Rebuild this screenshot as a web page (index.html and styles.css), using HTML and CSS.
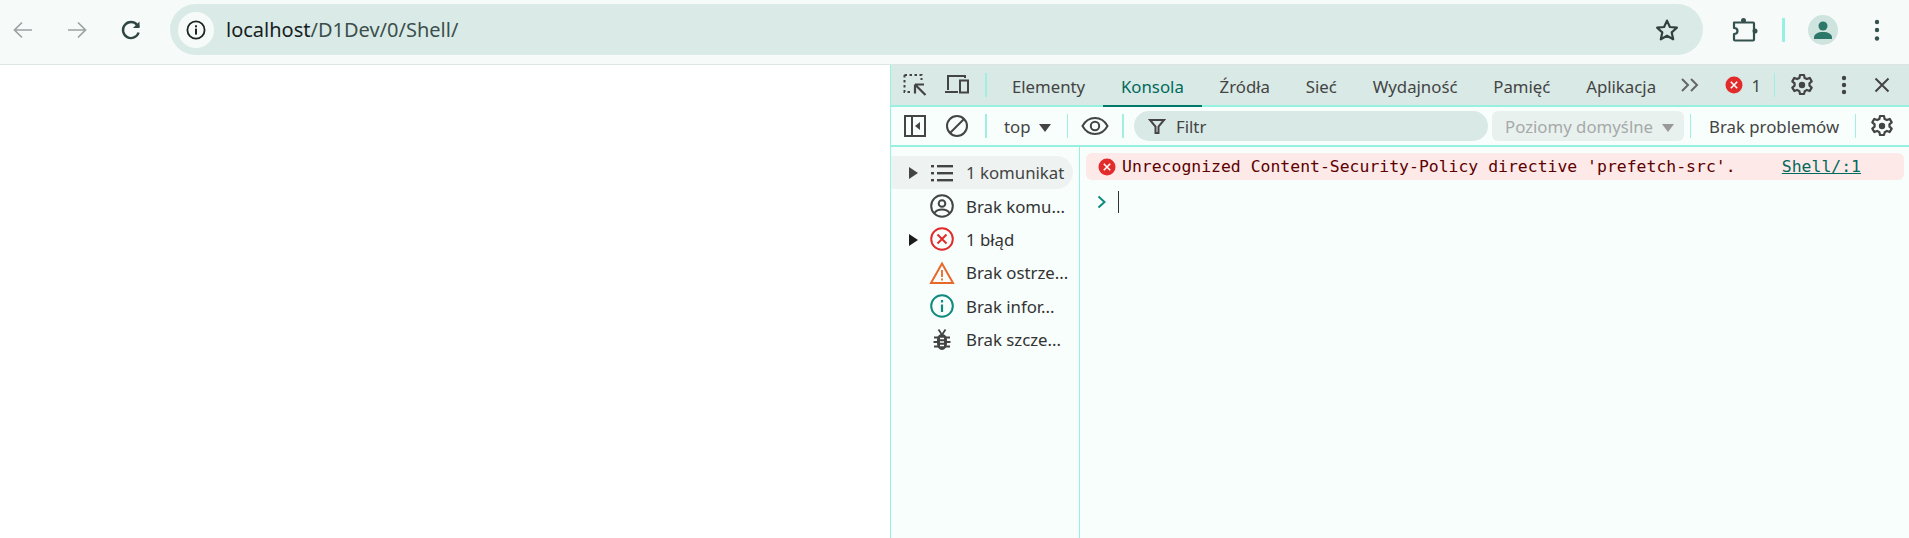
FILE: index.html
```html
<!DOCTYPE html>
<html lang="pl">
<head>
  <meta charset="UTF-8">
  <meta name="viewport" content="width=device-width, initial-scale=1.0">
  <title>localhost/D1Dev/0/Shell/</title>
  <link rel="stylesheet" href="styles.css">
</head>
<body>
  <header class="chrome-bar">
    <button class="nav-btn"><svg width="24" height="24" viewBox="0 0 24 24" fill="none" stroke="#9aa3a1" stroke-width="1.7"><path d="M21 12H3.500M11 4.500L3.500 12l7.500 7.500"/></svg></button>
    <button class="nav-btn"><svg width="24" height="24" viewBox="0 0 24 24" fill="none" stroke="#9aa3a1" stroke-width="1.7"><path d="M3 12h17.500M13 4.500l7.500 7.500-7.500 7.500"/></svg></button>
    <button class="nav-btn"><svg width="24" height="24" viewBox="0 0 24 24" fill="none" stroke="#2f4643" stroke-width="2.400"><path d="M19.600 14.500a8 8 0 1 1-1.500-7.600L20 9"/><path d="M20.500 3.500V10H14" fill="#2f4643" stroke="none"/></svg></button>
    <div class="omnibox">
      <span class="site-info"><svg width="22" height="22" viewBox="0 0 22 22"><circle cx="11" cy="11" r="8.600" fill="none" stroke="#1b2523" stroke-width="1.800"/><rect x="10" y="9.600" width="2" height="6" fill="#1b2523"/><rect x="10" y="6.300" width="2" height="2" fill="#1b2523"/></svg></span>
      <span class="url"><span class="url-host">localhost</span>/D1Dev/0/Shell/</span>
      <svg class="star" width="26" height="26" viewBox="0 0 26 26" fill="none" stroke="#34403e" stroke-width="2.200"><path d="M13 3.600l2.900 6.400 7 .7-5.200 4.700 1.500 6.900-6.200-3.600-6.200 3.600 1.500-6.900-5.200-4.700 7-.7z" stroke-linejoin="round"/></svg>
    </div>
    <button class="nav-btn puzzle"><svg width="28" height="28" viewBox="0 0 28 28" fill="none" stroke="#35514d" stroke-width="2.200" stroke-linejoin="round"><path d="M4 6.500h19a1 1 0 0 1 1 1v16a1 1 0 0 1-1 1H5a1 1 0 0 1-1-1v-5.500c2.500 0 3.500-1.500 3.500-3s-1-3-3.500-3z"/><circle cx="13.500" cy="4.500" r="2.500" fill="#35514d" stroke="none"/><circle cx="25" cy="15" r="2.500" fill="#35514d" stroke="none"/></svg></button>
    <span class="bar-sep"></span>
    <span class="avatar"><svg width="30" height="30" viewBox="0 0 30 30"><circle cx="15" cy="15" r="15" fill="#cfe4df"/><circle cx="15" cy="11" r="4.500" fill="#2d766a"/><path d="M6 22.500c0-3.500 4-5.500 9-5.500s9 2 9 5.500V24H6z" fill="#2d766a"/></svg></span>
    <button class="nav-btn kebab"><svg width="8" height="24" viewBox="0 0 8 24" fill="#35514d"><circle cx="4" cy="4" r="2.200"/><circle cx="4" cy="12" r="2.200"/><circle cx="4" cy="20.500" r="2.200"/></svg></button>
  </header>

  <main class="content">
    <div class="page"></div>

    <section class="devtools">
      <div class="tabbar">
        <button class="tool"><svg width="26" height="26" viewBox="0 0 26 26" fill="none" stroke="#444"><path d="M2.500 3h17v5M2.500 3v17h6" stroke-width="2" stroke-dasharray="2.500 2.500"/><path d="M13 12.500h9M13 12.500v9M13.500 13l10 10" stroke-width="2.200"/></svg></button>
        <button class="tool"><svg width="26" height="26" viewBox="0 0 26 26" fill="none" stroke="#444" stroke-width="2"><path d="M4 18V4h17v2M1 20h13"/><rect x="16" y="8.500" width="8" height="12"/></svg></button>
        <span class="sep"></span>
        <nav class="tabs">
          <a class="tab">Elementy</a>
          <a class="tab active">Konsola</a>
          <a class="tab">Źródła</a>
          <a class="tab">Sieć</a>
          <a class="tab">Wydajność</a>
          <a class="tab">Pamięć</a>
          <a class="tab">Aplikacja</a>
        </nav>
        <button class="more"><svg width="20" height="16" viewBox="0 0 20 16" fill="none" stroke="#666" stroke-width="2"><path d="M2 2l6 6-6 6M11 2l6 6-6 6"/></svg></button>
        <div class="tabbar-right">
          <span class="err-count"><svg width="18" height="18" viewBox="0 0 18 18"><circle cx="9" cy="9" r="8.500" fill="#e22c2c"/><path d="M5.800 5.800l6.400 6.400M12.200 5.800l-6.400 6.400" stroke="#fff" stroke-width="1.600"/></svg><span>1</span></span>
          <span class="sep"></span>
          <button class="tool gear"><svg width="24" height="24" viewBox="0 0 24 24" fill="none" stroke="#444" stroke-width="2.200" stroke-linejoin="round"><path d="M10 2h4l.6 3 2.300 1.100 2.800-1.200 2 3.400-2.300 2 .1 2.400 2.200 1.900-2 3.400-2.800-1.100-2.200 1.300-.7 2.800h-4l-.6-2.800-2.300-1.300-2.800 1.100-2-3.400 2.300-1.900V10.300l-2.300-2 2-3.400 2.800 1.200 2.300-1.100z"/><circle cx="12" cy="12" r="3.200" fill="#444" stroke="none"/></svg></button>
          <button class="tool dots"><svg width="6" height="20" viewBox="0 0 6 20" fill="#444"><circle cx="3" cy="3" r="2.200"/><circle cx="3" cy="10" r="2.200"/><circle cx="3" cy="17" r="2.200"/></svg></button>
          <button class="tool close"><svg width="18" height="18" viewBox="0 0 18 18" stroke="#444" stroke-width="2"><path d="M2.500 2.500l13 13M15.500 2.500l-13 13"/></svg></button>
        </div>
      </div>

      <div class="console-bar">
        <button class="tool"><svg width="22" height="22" viewBox="0 0 22 22" fill="none" stroke="#444" stroke-width="2"><rect x="1" y="1" width="20" height="20"/><path d="M8 1v20"/><path d="M16 7v8l-5-4z" fill="#444" stroke="none"/></svg></button>
        <button class="tool"><svg width="24" height="24" viewBox="0 0 24 24" fill="none" stroke="#444" stroke-width="2"><circle cx="12" cy="12" r="10"/><path d="M5 19L19 5"/></svg></button>
        <span class="sep"></span>
        <span class="context">top<i class="caret"></i></span>
        <span class="sep thin"></span>
        <button class="tool eye"><svg width="28" height="20" viewBox="0 0 28 20" fill="none" stroke="#444" stroke-width="2"><path d="M1.500 10C4.500 4.500 9 2 14 2s9.500 2.500 12.500 8c-3 5.500-7.500 8-12.500 8S4.500 15.500 1.500 10z"/><circle cx="14" cy="10" r="4.200"/></svg></button>
        <span class="sep"></span>
        <div class="filter">
          <svg width="18" height="18" viewBox="0 0 18 18" fill="none" stroke="#444" stroke-width="2"><path d="M2 3h14l-5.500 6.500V16h-3V9.500z"/></svg>
          <span>Filtr</span>
        </div>
        <div class="levels">Poziomy domyślne<i class="caret muted"></i></div>
        <span class="sep thin"></span>
        <span class="issues">Brak problemów</span>
        <span class="sep thin"></span>
        <button class="tool gear2"><svg width="24" height="24" viewBox="0 0 24 24" fill="none" stroke="#444" stroke-width="2.200" stroke-linejoin="round"><path d="M10 2h4l.6 3 2.300 1.100 2.800-1.200 2 3.400-2.300 2 .1 2.400 2.200 1.900-2 3.400-2.800-1.100-2.200 1.300-.7 2.800h-4l-.6-2.800-2.300-1.300-2.800 1.100-2-3.400 2.300-1.900V10.300l-2.300-2 2-3.400 2.800 1.200 2.300-1.100z"/><circle cx="12" cy="12" r="3.200" fill="#444" stroke="none"/></svg></button>
      </div>

      <div class="console-body">
        <aside class="sidebar">
          <div class="side-row selected"><i class="tri grey"></i>
            <svg width="24" height="24" viewBox="0 0 24 24" fill="#444"><rect x="1" y="4" width="3" height="2.400"/><rect x="7" y="4" width="16" height="2.400"/><rect x="1" y="11" width="3" height="2.400"/><rect x="7" y="11" width="16" height="2.400"/><rect x="1" y="18" width="3" height="2.400"/><rect x="7" y="18" width="16" height="2.400"/></svg>
            <span>1 komunikat</span></div>
          <div class="side-row">
            <svg width="24" height="24" viewBox="0 0 24 24" fill="none" stroke="#444" stroke-width="2"><circle cx="12" cy="12" r="10.800"/><circle cx="12" cy="9.500" r="3.300"/><path d="M4.500 19c1.500-2.500 4.500-3.500 7.500-3.500s6 1 7.500 3.500"/></svg>
            <span>Brak komu...</span></div>
          <div class="side-row"><i class="tri"></i>
            <svg width="24" height="24" viewBox="0 0 24 24" fill="none" stroke="#e22c2c" stroke-width="2"><circle cx="12" cy="12" r="10.800"/><path d="M7.500 7.500l9 9M16.500 7.500l-9 9"/></svg>
            <span>1 błąd</span></div>
          <div class="side-row">
            <svg class="warn" width="26" height="24" viewBox="0 0 26 24" fill="none" stroke="#e8682a" stroke-width="2"><path d="M13 2.500L2 22h22z"/><path d="M13 9v7M13 17.500v2" stroke-width="1.800"/></svg>
            <span>Brak ostrze...</span></div>
          <div class="side-row">
            <svg width="24" height="24" viewBox="0 0 24 24" fill="none" stroke="#0f8a7e" stroke-width="2"><circle cx="12" cy="12" r="10.800"/><path d="M12 10.500V18M12 6v2.400" stroke-width="2.200"/></svg>
            <span>Brak infor...</span></div>
          <div class="side-row">
            <svg width="24" height="24" viewBox="0 0 24 24" fill="#444"><path d="M12 6c3 0 5 2.500 5 6v3c0 4-2.200 7-5 7s-5-3-5-7v-3c0-3.500 2-6 5-6z"/><path d="M8.500 1.500l3 4.500M15.500 1.500l-3 4.500M4 9.500h16M3.500 14h17M4 18.500h16" stroke="#444" stroke-width="1.800"/><path d="M10 10.500h4M10 14h4M10 17.500h4" stroke="#f8fefc" stroke-width="1.600"/></svg>
            <span>Brak szcze...</span></div>
        </aside>

        <div class="log">
          <div class="msg">
            <svg width="18" height="18" viewBox="0 0 18 18"><circle cx="9" cy="9" r="8.500" fill="#e22c2c"/><path d="M5.800 5.800l6.400 6.400M12.200 5.800l-6.400 6.400" stroke="#fff" stroke-width="1.600"/></svg>
            <span class="msg-text">Unrecognized Content-Security-Policy directive 'prefetch-src'.</span>
            <a class="msg-link">Shell/:1</a>
          </div>
          <div class="prompt">
            <svg width="10" height="14" viewBox="0 0 10 14" fill="none" stroke="#0f8a7e" stroke-width="2"><path d="M1.500 1.500L7.500 7l-6 5.500"/></svg>
            <span class="cursor"></span>
          </div>
        </div>
      </div>
    </section>
  </main>
</body>
</html>
```

FILE: styles.css
```css
* {
  box-sizing: border-box;
  margin: 0;
  padding: 0;
}
html, body {
  height: 538px;
  overflow: hidden;
}
body {
  font-family: "Noto Sans", "Open Sans", sans-serif;
  background: #fff;
  color: #444;
  display: flex;
  flex-direction: column;
}
button {
  border: none;
  background: none;
  display: flex;
  align-items: center;
  justify-content: center;
}

/* browser toolbar */
.chrome-bar {
  flex: 0 0 65px;
  display: flex;
  align-items: center;
  padding: 0 14px 5px 5px;
  background: #f6fbf9;
  border-bottom: 1px solid #dbe6e3;
}
.nav-btn {
  width: 36px;
  height: 36px;
  margin-right: 18px;
}
.nav-btn:nth-child(3) { margin-right: 21px; }
.omnibox {
  flex: 1;
  height: 51px;
  display: flex;
  align-items: center;
  padding: 0 7px 0 8px;
  background: #daebe7;
  border-radius: 26px;
}
.site-info {
  width: 36px;
  height: 36px;
  border-radius: 50%;
  background: #f6fbf9;
  display: flex;
  align-items: center;
  justify-content: center;
}
.url {
  margin-left: 12px;
  font-size: 20px;
  color: #3c4f4c;
}
.url-host { color: #15201e; }
.star { margin-left: auto; margin-right: 16px; }
.nav-btn.puzzle { margin: 0 0 0 23px; }
.bar-sep {
  width: 3px;
  height: 24px;
  margin-left: 20px;
  background: #97f0e0;
}
.avatar {
  width: 30px;
  height: 30px;
  margin-left: 23px;
}
.nav-btn.kebab { margin: 0 0 0 21px; }

/* page + devtools */
.content {
  flex: 1;
  display: flex;
  min-height: 0;
}
.page {
  flex: 0 0 890px;
  background: #fff;
}
.devtools {
  flex: 1;
  min-width: 0;
  display: flex;
  flex-direction: column;
  background: #f8fefc;
  border-left: 1px solid #97f0e0;
}
.tool {
  width: 42px;
  height: 38px;
  flex: none;
}
.sep {
  flex: none;
  width: 2px;
  height: 24px;
  margin: 0 7px;
  background: #a0efe0;
}
.sep.thin { width: 1px; }

.tabbar {
  flex: 0 0 42px;
  display: flex;
  align-items: center;
  padding-left: 3px;
  background: #d9e9e6;
  border-bottom: 2px solid #97f0e0;
}
.tabs {
  display: flex;
  align-self: stretch;
}
.tab {
  display: flex;
  align-items: center;
  padding: 2px 17.900px 0;
  font-size: 16.800px;
  color: #444;
  border-bottom: 2px solid transparent;
  margin-bottom: -2px;
}
.tab.active {
  color: #00695c;
  border-bottom-color: #00796b;
}
.more {
  width: 32px;
  height: 38px;
}
.tabbar-right {
  margin-left: auto;
  display: flex;
  align-items: center;
  padding-right: 9px;
}
.err-count {
  display: flex;
  align-items: center;
  gap: 8px;
  font-size: 16.800px;
}
.tabbar-right .sep { width: 1px; margin: 0 5px 0 13px; }
.tool.gear { width: 44px; }
.tool.dots { width: 40px; }
.tool.close { width: 36px; }

.console-bar {
  flex: 0 0 40px;
  display: flex;
  align-items: center;
  padding-left: 3px;
  background: #f8fefc;
  border-bottom: 2px solid #97f0e0;
}
.context {
  flex: 0 0 63px;
  display: flex;
  align-items: center;
  margin-left: 10px;
  font-size: 16.800px;
  color: #444;
}
.caret {
  display: inline-block;
  width: 0;
  height: 0;
  margin-left: 8px;
  margin-top: 3px;
  border-left: 6px solid transparent;
  border-right: 6px solid transparent;
  border-top: 8px solid #444;
}
.caret.muted {
  margin-left: auto;
  border-top-color: #999;
}
.console-bar .context + .sep { margin: 0; }
.tool.eye { width: 54px; }
.tool.eye + .sep { margin: 0; }
.filter {
  flex: 0 0 354px;
  height: 30px;
  margin-left: 10px;
  display: flex;
  align-items: center;
  gap: 10px;
  padding-left: 14px;
  background: #d9e9e6;
  border-radius: 15px;
  font-size: 16.800px;
}
.levels {
  flex: 0 0 192px;
  height: 30px;
  margin-left: 4px;
  display: flex;
  align-items: center;
  padding: 0 10px 0 13px;
  background: #e9f1ef;
  border-radius: 6px;
  font-size: 16.800px;
  color: #a5a9a8;
  white-space: nowrap;
}
.levels + .sep { margin: 0 0 0 6px; }
.issues {
  flex: 0 0 146px;
  margin-left: 18px;
  font-size: 16.800px;
  white-space: nowrap;
}
.issues + .sep { margin: 0; }
.tool.gear2 { width: 52px; }

.console-body {
  flex: 1;
  display: flex;
  min-height: 0;
}
.sidebar {
  flex: 0 0 189px;
  padding-top: 9px;
  border-right: 1px solid #97f0e0;
}
.side-row {
  height: 33.4px;
  width: 182px;
  display: flex;
  align-items: center;
  padding-left: 39px;
  gap: 12px;
  position: relative;
  font-size: 16.800px;
  color: #333;
  white-space: nowrap;
}
.side-row.selected {
  background: #eef3f1;
  border-radius: 0 17px 17px 0;
  color: #444;
}
.warn { margin: 0 -1px; }
.tri {
  position: absolute;
  left: 18px;
  top: 11px;
  width: 0;
  height: 0;
  border-top: 6px solid transparent;
  border-bottom: 6px solid transparent;
  border-left: 9px solid #1c1c1c;
}
.tri.grey { border-left-color: #444; }

.log {
  flex: 1;
  min-width: 0;
  padding: 6px 5px 0 6px;
}
.msg {
  height: 27px;
  display: flex;
  align-items: center;
  padding: 0 43px 0 12px;
  background: #fde9e8;
  border-radius: 6px;
  font-family: "DejaVu Sans Mono", "Liberation Mono", monospace;
  font-size: 16.450px;
  color: #5c0000;
}
.msg-text { margin-left: 6px; }
.msg-link {
  margin-left: auto;
  color: #00695c;
  text-decoration: underline;
}
.prompt {
  display: flex;
  align-items: center;
  margin-top: 11px;
  padding-left: 11px;
}
.cursor {
  width: 1px;
  height: 22px;
  margin-left: 11px;
  background: #333;
}
```
